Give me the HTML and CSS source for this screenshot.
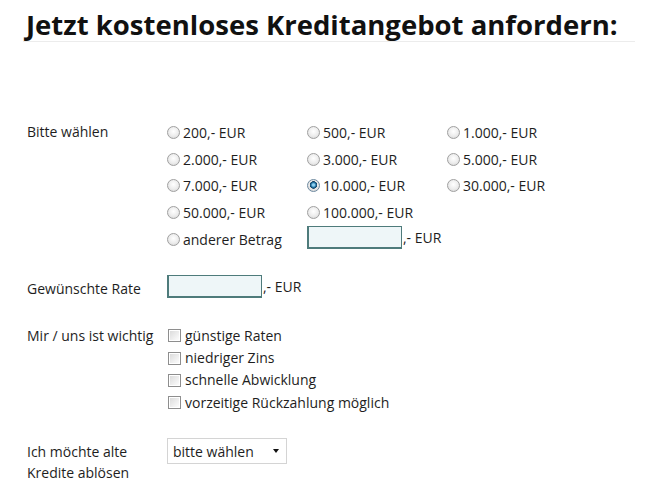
FILE: index.html
```html
<!DOCTYPE html>
<html lang="de">
<head>
<meta charset="utf-8">
<link rel="stylesheet" href="styles.css">
</head>
<body>
<h1 class="title">Jetzt kostenloses Kreditangebot anfordern:</h1>
<form class="form">
  <div class="row row-amount">
    <div class="label">Bitte wählen</div>
    <div class="options">
      <label class="opt"><input type="radio" name="b" class="radio">200,- EUR</label>
      <label class="opt"><input type="radio" name="b" class="radio">500,- EUR</label>
      <label class="opt"><input type="radio" name="b" class="radio">1.000,- EUR</label>
      <label class="opt"><input type="radio" name="b" class="radio">2.000,- EUR</label>
      <label class="opt"><input type="radio" name="b" class="radio">3.000,- EUR</label>
      <label class="opt"><input type="radio" name="b" class="radio">5.000,- EUR</label>
      <label class="opt"><input type="radio" name="b" class="radio">7.000,- EUR</label>
      <label class="opt"><input type="radio" name="b" class="radio" checked>10.000,- EUR</label>
      <label class="opt"><input type="radio" name="b" class="radio">30.000,- EUR</label>
      <label class="opt"><input type="radio" name="b" class="radio">50.000,- EUR</label>
      <label class="opt span2"><input type="radio" name="b" class="radio">100.000,- EUR</label>
      <label class="opt"><input type="radio" name="b" class="radio">anderer Betrag</label>
      <div class="opt span2 other"><input type="text" class="field">,- EUR</div>
    </div>
  </div>
  <div class="row row-rate">
    <div class="label label-rate">Gewünschte Rate</div>
    <div class="inline"><input type="text" class="field">,- EUR</div>
  </div>
  <div class="row row-checks">
    <div class="label label-lh">Mir / uns ist wichtig</div>
    <div class="checks">
      <label class="chk"><input type="checkbox" class="box">günstige Raten</label>
      <label class="chk"><input type="checkbox" class="box">niedriger Zins</label>
      <label class="chk"><input type="checkbox" class="box">schnelle Abwicklung</label>
      <label class="chk"><input type="checkbox" class="box">vorzeitige Rückzahlung möglich</label>
    </div>
  </div>
  <div class="row row-select">
    <div class="label label-two">Ich möchte alte<br>Kredite ablösen</div>
    <div class="select">
      <span class="select-text">bitte wählen</span>
      <span class="caret"></span>
    </div>
  </div>
</form>
</body>
</html>
```
FILE: styles.css
```css
html, body {
  margin: 0;
  padding: 0;
  background: #fff;
}
body {
  font-family: "Open Sans", "Liberation Sans", sans-serif;
  font-size: 14px;
  color: #1e1e1e;
  width: 648px;
  height: 487px;
  overflow: hidden;
}
.title {
  margin: 8px 13px 0 23px;
  padding-left: 3px;
  font-size: 27.5px;
  line-height: 33px;
  font-weight: 700;
  color: #111;
  border-bottom: 1px solid #ececec;
}
.form {
  padding-left: 27px;
  padding-top: 77px;
}
.row {
  display: flex;
  align-items: flex-start;
}
.label {
  width: 140px;
  flex: none;
  line-height: 26.75px;
}
.options {
  display: grid;
  grid-template-columns: 140px 140px 140px;
  grid-auto-rows: 26.75px;
}
.opt {
  display: flex;
  align-items: center;
  white-space: nowrap;
}
.span2 {
  grid-column: span 2;
}
.radio {
  appearance: none;
  -webkit-appearance: none;
  width: 13px;
  height: 13px;
  margin: 0 3px 0 0;
  border-radius: 50%;
  border: 1px solid #a0a0a0;
  background: radial-gradient(circle at 50% 40%, #ffffff 0%, #ececec 55%, #cfcfcf 100%);
  box-sizing: border-box;
  flex: none;
}
.radio:checked {
  border-color: #6e8aa0;
  background:
    radial-gradient(circle at 50% 45%, #8fd0f0 0 1px, #1f6f9f 2.5px, #123f60 3.5px, transparent 4px),
    radial-gradient(circle at 50% 40%, #ffffff 0%, #e4e4e4 60%, #c8c8c8 100%);
}
.other {
  margin-top: -3px;
}
.field {
  width: 95px;
  height: 23px;
  margin: 0 1px 0 0;
  padding: 0;
  box-sizing: border-box;
  background: #eef6f8;
  border: 1px solid #4e7b7b;
  border-left-width: 2px;
  border-bottom-width: 2px;
  flex: none;
}
.row-rate {
  margin-top: 17px;
  align-items: center;
}
.label-rate {
  padding-top: 6px;
}
.inline {
  display: flex;
  align-items: center;
}
.row-checks {
  margin-top: 22px;
}
.label-lh {
  line-height: 22.4px;
}
.checks {
  display: flex;
  flex-direction: column;
}
.chk {
  display: flex;
  align-items: center;
  line-height: 22.4px;
  white-space: nowrap;
}
.box {
  appearance: none;
  -webkit-appearance: none;
  width: 13px;
  height: 13px;
  margin: 0 4px 0 1px;
  border: 1px solid #8e8e8e;
  background: linear-gradient(135deg, #d8d8d8 0%, #f4f4f4 70%, #ffffff 100%);
  box-shadow: inset 0 0 0 1px #ffffff;
  box-sizing: border-box;
  flex: none;
}
.row-select {
  margin-top: 24px;
}
.label-two {
  line-height: 21px;
  padding-top: 3px;
}
.select {
  width: 120px;
  height: 26px;
  box-sizing: border-box;
  border: 1px solid #d4d4d4;
  background: #fff;
  display: flex;
  align-items: center;
  justify-content: space-between;
  padding: 0 7px 0 5px;
  font-size: 14px;
}
.caret {
  width: 0;
  height: 0;
  border-left: 3.5px solid transparent;
  border-right: 3.5px solid transparent;
  border-top: 4px solid #111;
}
```
